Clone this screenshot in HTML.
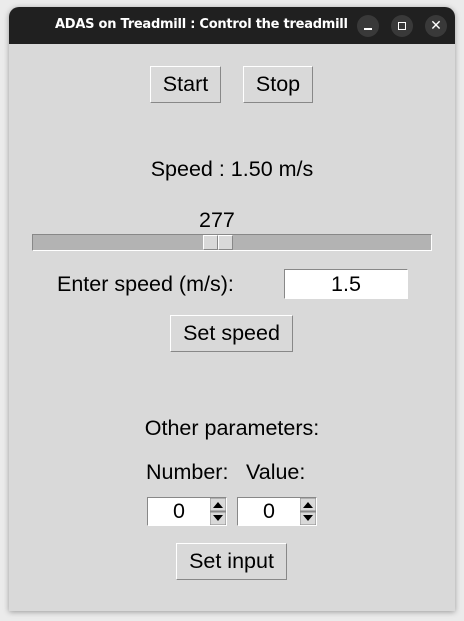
<!DOCTYPE html><html><head><style>
body{margin:0;width:464px;height:621px;background:#ebebeb;position:relative;overflow:hidden;font-family:"Liberation Sans",sans-serif;color:#000}
.a{position:absolute}
.win{left:9px;top:7px;width:446px;height:604px;background:#d9d9d9;border-radius:10px 10px 0 0;overflow:hidden;box-shadow:0 1px 6px rgba(0,0,0,.35)}
.tb{left:0;top:0;width:446px;height:37px;background:#202020}
.t{left:46px;top:10px;color:#fff;font:bold 13px "DejaVu Sans",sans-serif;white-space:nowrap;letter-spacing:-0.25px}
.c{width:22px;height:22px;border-radius:50%;background:#393939;top:8px}
.btn{background:#d9d9d9;border:1px solid;border-color:#fff #888 #888 #fff;box-sizing:border-box;font-size:21.5px;text-align:center}
.tx{font-size:21.5px;white-space:nowrap}
.ent{background:#fff;border:1px solid;border-color:#888 #fff #fff #888;box-sizing:border-box;font-size:21.5px;text-align:center}
</style></head><body>
<div class="a win">
<div class="a tb"></div>
<div class="a t">ADAS on Treadmill : Control the treadmill</div>
<div class="a c" style="left:348px"><div class="a" style="left:7px;top:13px;width:8px;height:1.5px;background:#fff"></div></div>
<div class="a c" style="left:382px"><div class="a" style="left:7px;top:7px;width:6px;height:6px;border:1.5px solid #fff"></div></div>
<div class="a c" style="left:416px;color:#fff;font:14px 'DejaVu Sans';text-align:center;line-height:22px">✕</div>
</div>
<div class="a btn" style="left:150px;top:66px;width:71px;height:37px;line-height:35px">Start</div>
<div class="a btn" style="left:243px;top:66px;width:70px;height:37px;line-height:35px">Stop</div>
<div class="a tx" style="left:0;width:464px;text-align:center;top:157px">Speed : 1.50 m/s</div>
<div class="a tx" style="left:199px;top:208px">277</div>
<div class="a" style="left:32px;top:234px;width:400px;height:17px;background:#b3b3b3;border:1px solid;border-color:#888 #fff #fff #888;box-sizing:border-box"></div>
<div class="a" style="left:203px;top:235px;width:15px;height:15px;background:#d9d9d9;border:1px solid;border-color:#fff #888 #888 #fff;box-sizing:border-box"></div>
<div class="a" style="left:218px;top:235px;width:15px;height:15px;background:#d9d9d9;border:1px solid;border-color:#fff #888 #888 #fff;box-sizing:border-box"></div>
<div class="a tx" style="left:57px;top:272px">Enter speed (m/s):</div>
<div class="a ent" style="left:284px;top:269px;width:124px;height:30px;line-height:28px">1.5</div>
<div class="a btn" style="left:170px;top:315px;width:123px;height:37px;line-height:35px">Set speed</div>
<div class="a tx" style="left:0;width:464px;text-align:center;top:416px">Other parameters:</div>
<div class="a tx" style="left:146px;top:460px">Number:</div>
<div class="a tx" style="left:246px;top:460px">Value:</div>
<div class="a ent" style="left:147px;top:497px;width:80px;height:29px;line-height:27px;text-align:left;padding-left:25px">0</div>
<div class="a ent" style="left:237px;top:497px;width:80px;height:29px;line-height:27px;text-align:left;padding-left:25px">0</div>
<svg class="a" style="left:210px;top:498px" width="16" height="27"><rect x="0" y="0" width="16" height="13" fill="#d9d9d9" stroke="#888"/><rect x="0" y="14" width="16" height="13" fill="#d9d9d9" stroke="#888"/><path d="M3 10L8 4L13 10Z M3 17L13 17L8 23Z"/></svg>
<svg class="a" style="left:300px;top:498px" width="16" height="27"><rect x="0" y="0" width="16" height="13" fill="#d9d9d9" stroke="#888"/><rect x="0" y="14" width="16" height="13" fill="#d9d9d9" stroke="#888"/><path d="M3 10L8 4L13 10Z M3 17L13 17L8 23Z"/></svg>
<div class="a btn" style="left:176px;top:543px;width:111px;height:37px;line-height:35px">Set input</div>
</body></html>
